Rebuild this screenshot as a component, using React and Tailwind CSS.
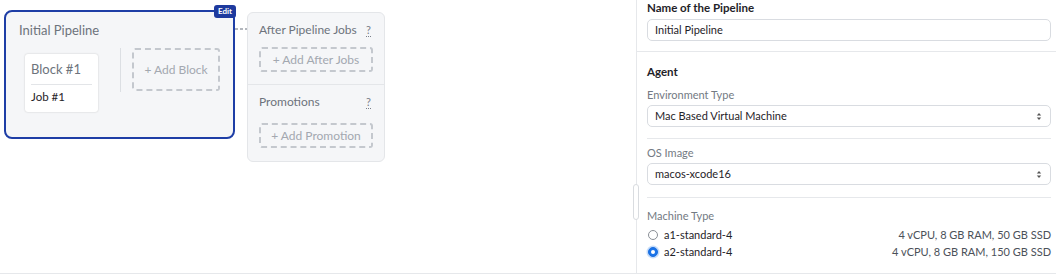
import React from 'react';

const font = { fontFamily: 'Lato, "Liberation Sans", sans-serif' };

function DashedButton({ label, className = '' }) {
  return (
    <div
      className={`flex items-center justify-center border-2 border-dashed border-[#c4c8ce] rounded-[3px] text-[12px] text-[#a3a8b0] ${className}`}
    >
      {label}
    </div>
  );
}

function Help() {
  return <span className="text-[11px] text-[#7a808a] underline underline-offset-2 decoration-dotted">?</span>;
}

function SelectBox({ value }) {
  return (
    <div className="flex items-center justify-between h-[22px] px-[7px] border border-[#d9dce1] rounded-[5px] bg-white text-[11px] text-[#1f2329]">
      <span>{value}</span>
      <svg width="6" height="9" viewBox="0 0 6 9" className="mr-[1px]">
        <path d="M0.8 3.4 L3 1 L5.2 3.4 Z" fill="#555" />
        <path d="M0.8 5.6 L3 8 L5.2 5.6 Z" fill="#555" />
      </svg>
    </div>
  );
}

function Radio({ checked }) {
  if (checked) {
    return (
      <span className="w-[10px] h-[10px] rounded-full bg-[#1a73e8] border border-[#1a6fe0] flex items-center justify-center shadow-[0_0_0_1.5px_rgba(26,115,232,0.25)]">
        <span className="w-[4px] h-[4px] rounded-full bg-white" />
      </span>
    );
  }
  return <span className="w-[10px] h-[10px] rounded-full border border-[#8a8f96] bg-white" />;
}

function MachineRow({ name, spec, checked }) {
  return (
    <div className="flex items-center justify-between">
      <div className="flex items-center gap-[6px] pl-[1px]">
        <Radio checked={checked} />
        <span>{name}</span>
      </div>
      <span className="text-[#4b5159]">{spec}</span>
    </div>
  );
}

export default function App() {
  return (
    <div className="w-[1056px] h-[276px] bg-white overflow-hidden leading-[14px]" style={font}>
      <div className="flex h-[274px] border-b border-[#e6e8eb]">
        {/* canvas */}
        <div className="w-[636px] pl-[4px] pt-[10px] flex items-start">
          <div className="relative w-[231px] h-[129px] rounded-[8px] border-2 border-[#1e3ea6] bg-[#f5f6f8] px-[13px] pt-[11px]">
            <span className="absolute -top-[7px] right-[-3px] bg-[#1e3a9e] text-white text-[8px] leading-[13px] px-[4px] rounded-[3px] font-bold">
              Edit
            </span>
            <div className="text-[13px] text-[#6d737c]">Initial Pipeline</div>
            <div className="flex items-start mt-[11px]">
              <div className="w-[73px] h-[58px] mt-[6px] ml-[6px] bg-white rounded-[3px] shadow-[0_0_2px_rgba(0,0,0,0.2)] px-[6px]">
                <div className="text-[13px] text-[#6d737c] pt-[8px] pb-[8px] border-b border-[#e3e5e8]">Block #1</div>
                <div className="text-[11.5px] text-[#1f2329] pt-[5px]">Job #1</div>
              </div>
              <div className="w-px h-[44px] bg-[#dcdfe3] ml-[22px]" />
              <DashedButton label="+ Add Block" className="w-[88px] h-[43px] ml-[11px]" />
            </div>
          </div>
          <svg width="12" height="4" className="mt-[17px]">
            <path d="M0 2 H12" stroke="#9ba0a8" strokeWidth="1.6" strokeDasharray="3 2" />
          </svg>
          <div className="w-[138px] h-[150px] mt-[2px] rounded-[6px] border border-[#e4e6e9] bg-[#f5f6f8]">
            <div className="px-[11px] pt-[10px] pb-[12px] border-b border-[#e4e6e9]">
              <div className="flex items-center justify-between text-[12px] text-[#6d737c] pr-[2px]">
                <span>After Pipeline Jobs</span>
                <Help />
              </div>
              <DashedButton label="+ Add After Jobs" className="h-[25px] mt-[10px]" />
            </div>
            <div className="px-[11px] pt-[10px]">
              <div className="flex items-center justify-between text-[12px] text-[#6d737c] pr-[2px]">
                <span>Promotions</span>
                <Help />
              </div>
              <DashedButton label="+ Add Promotion" className="h-[25px] mt-[14px]" />
            </div>
          </div>
        </div>

        {/* side panel */}
        <div className="relative w-[420px] border-l border-[#e6e8eb]">
          <span className="absolute left-[-4px] top-[184px] w-[6px] h-[36px] rounded-full border border-[#d9dce0] bg-white" />
          <div className="pl-[10px] pr-[5px] pt-[1px] pb-[10px] border-b border-[#e6e8eb]">
            <div className="text-[11.5px] font-bold text-[#1f2329]">Name of the Pipeline</div>
            <div className="mt-[4px] h-[22px] px-[7px] flex items-center border border-[#d9dce1] rounded-[5px] text-[11px] text-[#1f2329]">
              Initial Pipeline
            </div>
          </div>
          <div className="pl-[10px] pr-[5px] pt-[13px]">
            <div className="text-[11.5px] font-bold text-[#1f2329]">Agent</div>
            <div className="text-[11px] text-[#737a83] mt-[9px]">Environment Type</div>
            <div className="mt-[3px]"><SelectBox value="Mac Based Virtual Machine" /></div>
            <div className="border-t border-[#e6e8eb] mt-[11px] pt-[7px]">
              <div className="text-[11px] text-[#737a83]">OS Image</div>
              <div className="mt-[3px]"><SelectBox value="macos-xcode16" /></div>
            </div>
            <div className="border-t border-[#e6e8eb] mt-[12px] pt-[11px]">
              <div className="text-[11px] text-[#737a83]">Machine Type</div>
              <div className="mt-[5px] flex flex-col gap-[3px] text-[11px] text-[#1f2329]">
                <MachineRow name="a1-standard-4" spec="4 vCPU, 8 GB RAM, 50 GB SSD" />
                <MachineRow name="a2-standard-4" spec="4 vCPU, 8 GB RAM, 150 GB SSD" checked />
              </div>
            </div>
          </div>
        </div>
      </div>
    </div>
  );
}
